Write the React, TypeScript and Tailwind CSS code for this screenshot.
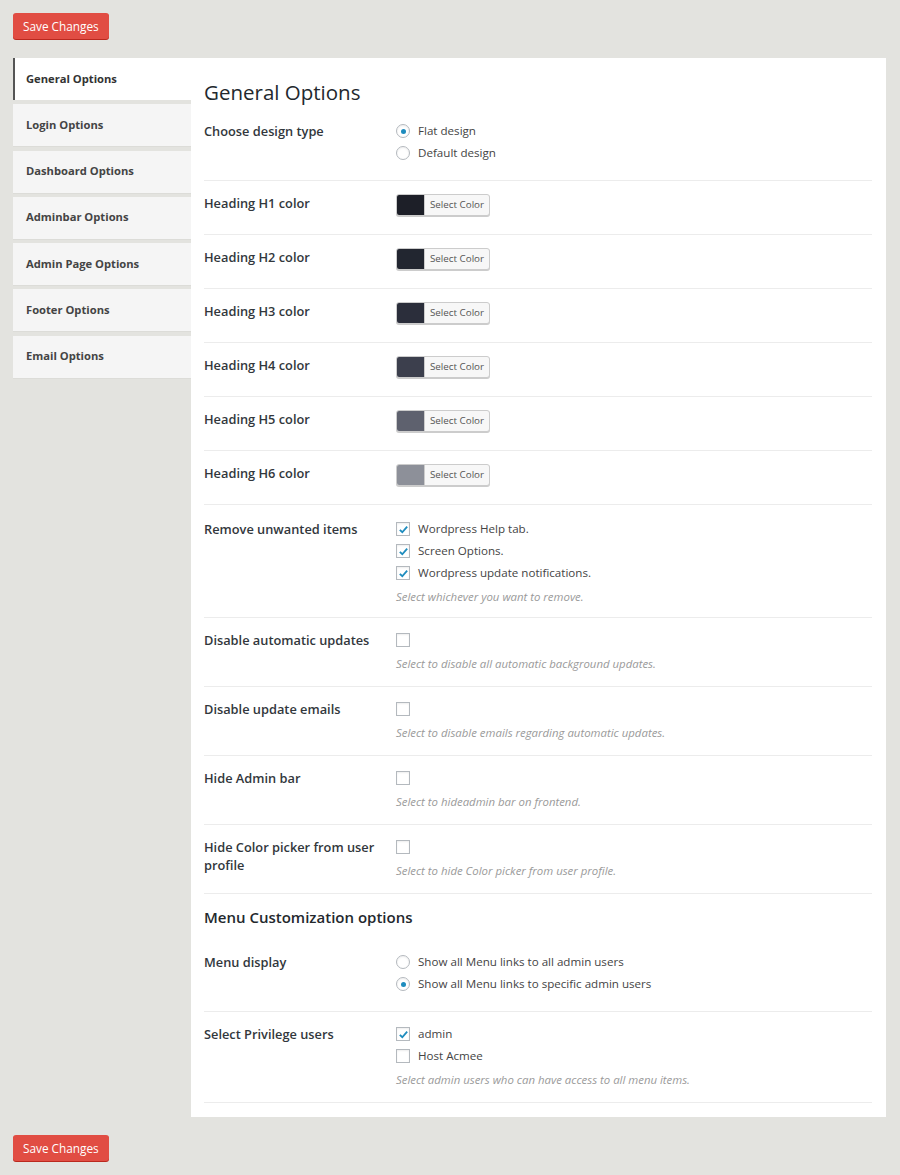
import React from "react";

interface ColorRow {
  label: string;
  color: string;
}

const tabs: string[] = [
  "General Options",
  "Login Options",
  "Dashboard Options",
  "Adminbar Options",
  "Admin Page Options",
  "Footer Options",
  "Email Options",
];

const colorRows: ColorRow[] = [
  { label: "Heading H1 color", color: "#1d1f28" },
  { label: "Heading H2 color", color: "#222630" },
  { label: "Heading H3 color", color: "#2b2e3b" },
  { label: "Heading H4 color", color: "#3c3f4d" },
  { label: "Heading H5 color", color: "#5e616e" },
  { label: "Heading H6 color", color: "#8d9099" },
];

const SaveButton: React.FC = () => (
  <button
    type="button"
    className="h-[26px] rounded-[3px] bg-[#e14d43] px-[10px] text-[11.8px] leading-[26px] text-white shadow-[0_1px_0_#ba281e]"
  >
    Save Changes
  </button>
);

const Radio: React.FC<{ checked?: boolean; label: string }> = ({ checked, label }) => (
  <label className="flex h-[22px] items-center text-[11.6px] text-[#444]">
    <span className="mr-[8px] flex h-[14px] w-[14px] items-center justify-center rounded-full border border-[#b4b9be] bg-white shadow-[inset_0_1px_2px_rgba(0,0,0,0.07)]">
      {checked && <span className="h-[5px] w-[5px] rounded-full bg-[#1e8cbe]" />}
    </span>
    {label}
  </label>
);

const Checkbox: React.FC<{ checked?: boolean; label?: string }> = ({ checked, label }) => (
  <label className="flex h-[22px] items-center text-[11.6px] text-[#444]">
    <span className="mr-[8px] flex h-[14px] w-[14px] items-center justify-center border border-[#b4b9be] bg-white shadow-[inset_0_1px_2px_rgba(0,0,0,0.07)]">
      {checked && (
        <svg width="11" height="11" viewBox="0 0 12 12">
          <path d="M2 6.3 L4.7 9 L10 2.8" fill="none" stroke="#1e8cbe" strokeWidth="2" />
        </svg>
      )}
    </span>
    {label}
  </label>
);

const Description: React.FC<{ children: React.ReactNode }> = ({ children }) => (
  <p className="mt-[4px] text-[11.4px] italic leading-[18px] text-[#9a9a9a]">{children}</p>
);

// one settings line: bold label on the left, field(s) on the right
const Row: React.FC<{ label: string; className?: string; labelOffset?: string; children: React.ReactNode }> = ({
  label,
  className = "pt-[11px] pb-[13px]",
  labelOffset = "pt-[2px]",
  children,
}) => (
  <div className={`flex border-b border-[#ececec] ${className}`}>
    <div
      className={`w-[192px] shrink-0 pr-[10px] text-[12.8px] font-semibold leading-[18px] text-[#32373c] ${labelOffset}`}
    >
      {label}
    </div>
    <div className="flex-1">{children}</div>
  </div>
);

const ColorPicker: React.FC<{ color: string }> = ({ color }) => (
  <button
    type="button"
    className="flex h-[22px] overflow-hidden rounded-[3px] border border-[#ccc] bg-[#f7f7f7] shadow-[0_1px_0_#ccc]"
  >
    <span className="h-full w-[27px]" style={{ backgroundColor: color }} />
    <span className="border-l border-[#ccc] px-[5px] text-[9.8px] leading-[20px] text-[#555]">Select Color</span>
  </button>
);

export default function App() {
  return (
    <div className="min-h-screen bg-[#e3e3df] px-[13px] pt-[13px] pb-[14px] font-['Open_Sans',sans-serif] text-[#444]">
      <SaveButton />

      <div className="mt-[19px] mr-px flex items-start">
        <ul className="w-[178px] shrink-0">
          {tabs.map((tab, i) => (
            <li
              key={tab}
              className={`mb-[4.3px] flex h-[42px] items-center text-[11.2px] font-bold ${
                i === 0
                  ? "border-l-2 border-[#555] bg-white pl-[11px] text-[#333]"
                  : "bg-[#f5f5f5] pl-[13px] text-[#444] shadow-[0_1px_0_#dcdcd8]"
              }`}
            >
              {tab}
            </li>
          ))}
        </ul>

        <div className="flex-1 bg-white pr-[14px] pb-[14px] pl-[13px]">
          <h2 className="pt-[18px] text-[20.5px] leading-[33px] font-normal text-[#23282d]">General Options</h2>

          <Row label="Choose design type" className="pt-[11px] pb-[16px]">
            <Radio checked label="Flat design" />
            <Radio label="Default design" />
          </Row>

          {colorRows.map((row) => (
            <Row key={row.label} label={row.label} className="pt-[13px] pb-[18px]" labelOffset="pt-0">
              <ColorPicker color={row.color} />
            </Row>
          ))}

          <Row label="Remove unwanted items" className="pt-[13px] pb-[11px]">
            <Checkbox checked label="Wordpress Help tab." />
            <Checkbox checked label="Screen Options." />
            <Checkbox checked label="Wordpress update notifications." />
            <Description>Select whichever you want to remove.</Description>
          </Row>

          <Row label="Disable automatic updates">
            <Checkbox />
            <Description>Select to disable all automatic background updates.</Description>
          </Row>

          <Row label="Disable update emails">
            <Checkbox />
            <Description>Select to disable emails regarding automatic updates.</Description>
          </Row>

          <Row label="Hide Admin bar">
            <Checkbox />
            <Description>Select to hideadmin bar on frontend.</Description>
          </Row>

          <Row label="Hide Color picker from user profile">
            <Checkbox />
            <Description>Select to hide Color picker from user profile.</Description>
          </Row>

          <h3 className="pt-[12px] pb-[12px] text-[15px] leading-[22px] font-semibold text-[#23282d]">
            Menu Customization options
          </h3>

          <Row label="Menu display" className="pt-[11px] pb-[16px]">
            <Radio label="Show all Menu links to all admin users" />
            <Radio checked label="Show all Menu links to specific admin users" />
          </Row>

          <Row label="Select Privilege users">
            <Checkbox checked label="admin" />
            <Checkbox label="Host Acmee" />
            <Description>Select admin users who can have access to all menu items.</Description>
          </Row>
        </div>
      </div>

      <div className="mt-[18px]">
        <SaveButton />
      </div>
    </div>
  );
}
